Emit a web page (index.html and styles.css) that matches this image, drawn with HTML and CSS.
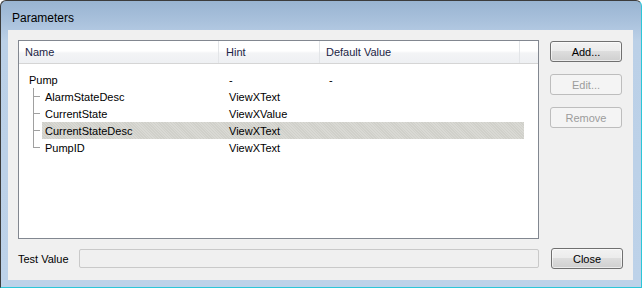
FILE: index.html
```html
<!DOCTYPE html>
<html lang="en">
<head>
    <meta charset="UTF-8">
    <title>Parameters</title>
    <link rel="stylesheet" href="styles.css">
</head>
<body>
    <div class="window">
        <div class="titlebar">Parameters</div>
        <div class="client">
            <div class="main-row">
                <div class="list">
                    <div class="list-header">
                        <div class="col col-name">Name</div>
                        <div class="col col-hint">Hint</div>
                        <div class="col col-def">Default Value</div>
                        <div class="col col-fill"></div>
                    </div>
                    <div class="list-body">
                        <div class="row">
                            <div class="c-name">Pump</div>
                            <div class="c-hint">-</div>
                            <div class="c-def">-</div>
                        </div>
                        <div class="children">
                            <div class="row child">
                                <div class="c-name">AlarmStateDesc</div>
                                <div class="c-hint">ViewXText</div>
                                <div class="c-def"></div>
                            </div>
                            <div class="row child">
                                <div class="c-name">CurrentState</div>
                                <div class="c-hint">ViewXValue</div>
                                <div class="c-def"></div>
                            </div>
                            <div class="row child selected">
                                <div class="c-name">CurrentStateDesc</div>
                                <div class="c-hint">ViewXText</div>
                                <div class="c-def"></div>
                            </div>
                            <div class="row child last">
                                <div class="c-name">PumpID</div>
                                <div class="c-hint">ViewXText</div>
                                <div class="c-def"></div>
                            </div>
                        </div>
                    </div>
                </div>
                <div class="side-buttons">
                    <button class="btn">Add...</button>
                    <button class="btn" disabled>Edit...</button>
                    <button class="btn" disabled>Remove</button>
                </div>
            </div>
            <div class="bottom-row">
                <label class="test-label">Test Value</label>
                <input class="test-input" type="text" disabled>
                <button class="btn">Close</button>
            </div>
        </div>
    </div>
</body>
</html>
```

FILE: styles.css
```css
* {
    margin: 0;
    padding: 0;
    box-sizing: border-box;
}

body {
    width: 642px;
    height: 288px;
    overflow: hidden;
    background: #ffffff;
    font-family: 'Liberation Sans', Arial, sans-serif;
    font-size: 11px;
    color: #000;
}

.window {
    width: 642px;
    height: 288px;
    display: flex;
    flex-direction: column;
    border: 1px solid #3c3c3c;
    border-right-color: #2cc6d8;
    border-bottom-color: #2cc6d8;
    border-radius: 6px 6px 0 0;
    background: linear-gradient(180deg, #99b4d1 0px, #a9c1dc 20px, #bbd0e7 40px, #bdd2e9 100%);
}

.titlebar {
    height: 29px;
    flex: none;
    padding-left: 11px;
    padding-top: 10px;
    font-size: 12px;
    color: #000;
}

.client {
    flex: 1;
    margin: 0 8px 7px 7px;
    background: #f0f0f0;
    padding: 10px 10px 11px 10px;
    display: flex;
    flex-direction: column;
    gap: 9px;
}

.main-row {
    display: flex;
    gap: 11px;
    height: 199px;
}

.list {
    width: 521px;
    height: 199px;
    border: 1px solid #828790;
    background: #fff;
}

.list-header {
    display: flex;
    height: 23px;
    border-bottom: 1px solid #d5d5d5;
    background: linear-gradient(180deg, #ffffff 0%, #ffffff 45%, #f3f4f6 55%, #eef0f3 100%);
}

.col {
    padding-left: 6px;
    line-height: 22px;
    color: #1c2445;
    border-right: 1px solid #e3e5e8;
}

.col-name { width: 200px; }
.col-hint { width: 101px; padding-left: 7px; }
.col-def { width: 200px; }
.col-fill { flex: 1; border-right: none; }

.list-body {
    padding-top: 7px;
}

.row {
    display: flex;
    height: 17px;
    align-items: center;
    position: relative;
}

.c-name {
    width: 200px;
    padding-left: 10px;
}

.c-hint {
    width: 100px;
    padding-left: 10px;
}

.c-def {
    padding-left: 10px;
}

.children {
    margin-left: 23px;
    margin-right: 14px;
}

.row.child .c-name {
    width: 177px;
    padding-left: 3px;
}

/* tree connector lines */
.row.child::before {
    content: '';
    position: absolute;
    left: -9px;
    top: 8px;
    width: 7px;
    border-top: 1px solid #a0a0a0;
}

.row.child::after {
    content: '';
    position: absolute;
    left: -9px;
    top: 0;
    height: 17px;
    border-left: 1px solid #a0a0a0;
}

.row.child.last::after {
    height: 9px;
}

.row.selected {
    background: repeating-linear-gradient(45deg, #d0d0ca 0px, #d0d0ca 1px, #d9d9d4 1px, #d9d9d4 2px);
}

.side-buttons {
    display: flex;
    flex-direction: column;
    gap: 12px;
    padding-top: 1px;
}

.btn {
    width: 72px;
    height: 21px;
    font-family: inherit;
    font-size: 11px;
    color: #000;
    border: 1px solid #707070;
    border-radius: 3px;
    background: linear-gradient(180deg, #f2f2f2 0%, #ebebeb 50%, #dddddd 50%, #cfcfcf 100%);
    box-shadow: inset 0 0 0 1px rgba(255, 255, 255, 0.6);
}

.btn:disabled {
    color: #9c9c9c;
    border-color: #bdbdbd;
    background: #f4f4f4;
    box-shadow: none;
}

.bottom-row {
    display: flex;
    align-items: center;
    height: 21px;
}

.test-label {
    width: 61px;
}

.test-input {
    width: 460px;
    height: 19px;
    border: 1px solid #c9c9c9;
    border-radius: 2px;
    background: #f0f0f0;
    margin-right: 12px;
}
```
